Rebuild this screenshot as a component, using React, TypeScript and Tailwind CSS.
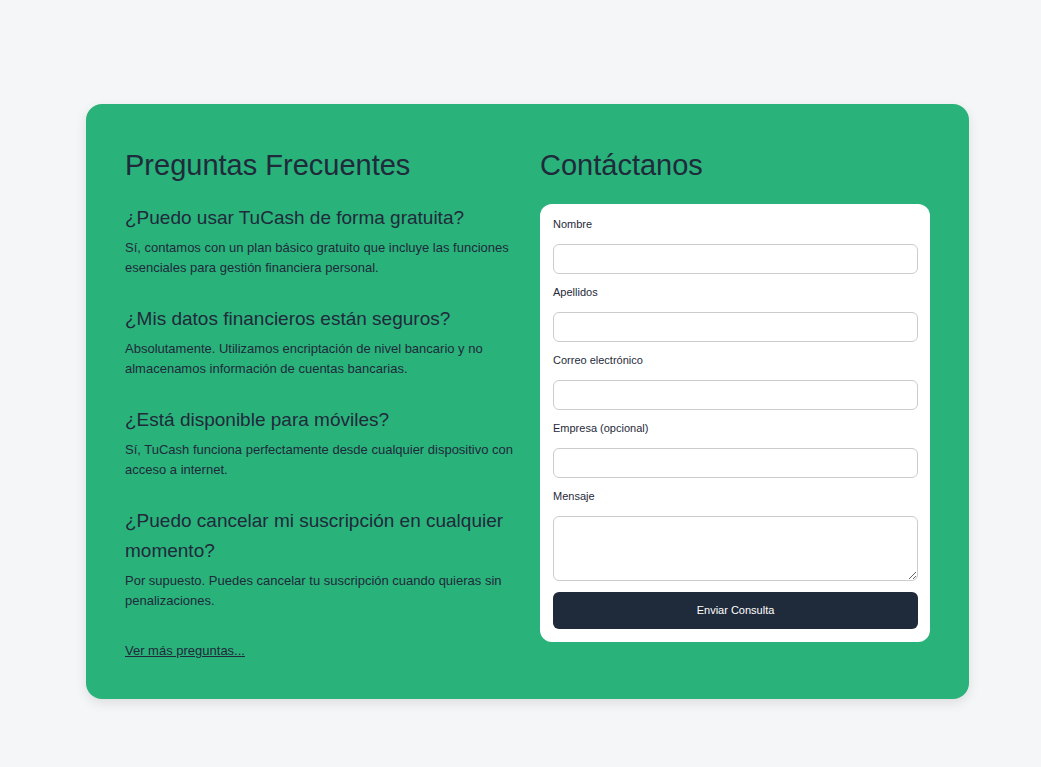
import React from "react";

const questions = [
  {
    title: "¿Puedo usar TuCash de forma gratuita?",
    answer:
      "Sí, contamos con un plan básico gratuito que incluye las funciones esenciales para gestión financiera personal.",
  },
  {
    title: "¿Mis datos financieros están seguros?",
    answer:
      "Absolutamente. Utilizamos encriptación de nivel bancario y no almacenamos información de cuentas bancarias.",
  },
  {
    title: "¿Está disponible para móviles?",
    answer:
      "Sí, TuCash funciona perfectamente desde cualquier dispositivo con acceso a internet.",
  },
  {
    title: "¿Puedo cancelar mi suscripción en cualquier momento?",
    answer:
      "Por supuesto. Puedes cancelar tu suscripción cuando quieras sin penalizaciones.",
  },
];

const fields = [
  { id: "nombre", label: "Nombre", type: "text" },
  { id: "apellidos", label: "Apellidos", type: "text" },
  { id: "correo", label: "Correo electrónico", type: "email" },
  { id: "empresa", label: "Empresa (opcional)", type: "text" },
];

export default function App() {
  return (
    <main className="min-h-screen bg-[#f4f6f8] pt-[104px] pr-[72px] pb-[68px] pl-[86px] font-['Liberation_Sans',Arial,sans-serif] text-[#1f2a3a]">
      <section className="grid grid-cols-2 gap-[25px] rounded-2xl bg-[#2ab27b] px-[39px] pt-[39px] pb-[38px] shadow-[0_4px_12px_rgba(0,0,0,0.1)]">
        <div>
          <h2 className="mb-[15px] text-[29px] leading-[45px]">Preguntas Frecuentes</h2>
          {questions.map((q) => (
            <article key={q.title} className="mb-[26px]">
              <h3 className="mb-[5px] text-[19px] leading-[30px]">{q.title}</h3>
              <p className="text-[13px] leading-[20px]">{q.answer}</p>
            </article>
          ))}
          <a href="#preguntas" className="mt-[30px] block text-[13px] leading-[20px] underline">
            Ver más preguntas...
          </a>
        </div>
        <div>
          <h2 className="mb-4 text-[29px] leading-[45px]">Contáctanos</h2>
          <form className="flex flex-col rounded-xl bg-white pt-3 pr-3 pb-[13px] pl-[13px] text-[11px] leading-[17px]">
            {fields.map((f) => (
              <div key={f.id} className="mb-[10px] flex flex-col gap-[11px]">
                <label htmlFor={f.id}>{f.label}</label>
                <input
                  id={f.id}
                  name={f.id}
                  type={f.type}
                  className="h-[30px] w-full rounded-md border border-[#cccccc] bg-white px-2"
                />
              </div>
            ))}
            <div className="mb-[11px] flex flex-col gap-[11px]">
              <label htmlFor="mensaje">Mensaje</label>
              <textarea
                id="mensaje"
                name="mensaje"
                className="h-[65px] w-full resize-y rounded-md border border-[#cccccc] bg-white p-2"
              />
            </div>
            <button type="button" className="h-[37px] rounded-md bg-[#1f2a3a] text-white">
              Enviar Consulta
            </button>
          </form>
        </div>
      </section>
    </main>
  );
}
